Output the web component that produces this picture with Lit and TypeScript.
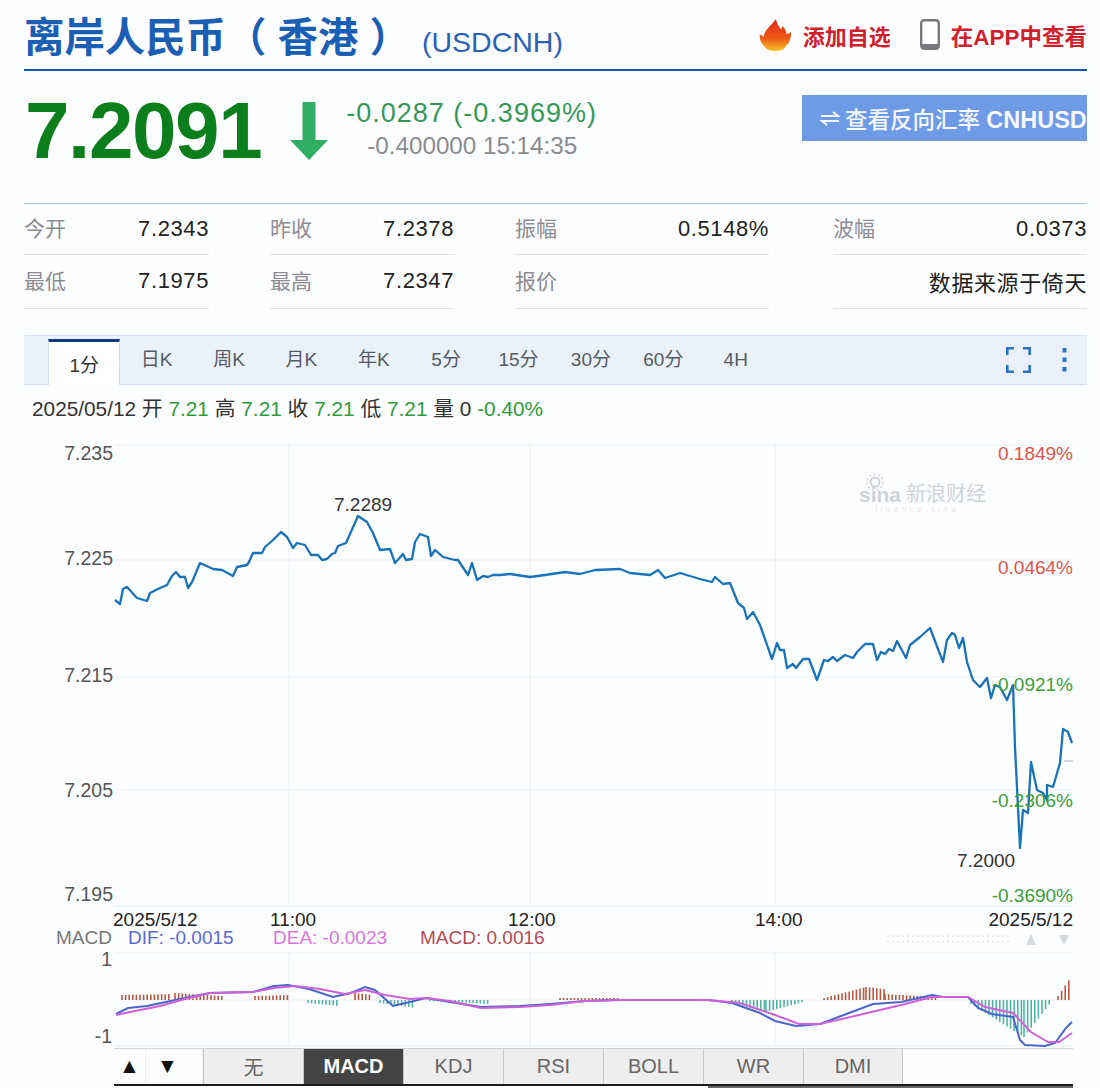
import { LitElement, html, svg, css } from 'lit';
import { customElement } from 'lit/decorators.js';

const STATS = [
  ['今开', '7.2343'], ['昨收', '7.2378'], ['振幅', '0.5148%'], ['波幅', '0.0373'],
  ['最低', '7.1975'], ['最高', '7.2347'], ['报价', ''], ['', '数据来源于倚天'],
];
const PERIODS = ['1分', '日K', '周K', '月K', '年K', '5分', '15分', '30分', '60分', '4H'];
const INDICATORS = ['无', 'MACD', 'KDJ', 'RSI', 'BOLL', 'WR', 'DMI'];

// 价格曲线，坐标就是截图里的像素位置
const PRICE: number[][] = [
  [115, 600], [120, 604], [123, 589], [127, 587], [137, 598], [147, 601], [150, 593], [160, 588], [167, 585],
  [172, 576], [176, 572], [180, 577], [185, 577], [188, 588], [192, 582], [200, 563], [213, 569], [222, 570],
  [233, 576], [237, 567], [247, 565], [249, 562], [253, 553], [262, 553], [265, 547], [273, 540], [281, 532],
  [287, 537], [293, 548], [297, 543], [305, 545], [311, 555], [318, 555], [322, 560], [327, 559], [332, 554],
  [335, 553], [338, 546], [346, 543], [358, 516], [367, 522], [373, 533], [380, 550], [390, 549], [395, 563],
  [403, 554], [406, 560], [412, 559], [415, 542], [420, 534], [428, 537], [431, 556], [435, 550], [443, 557],
  [455, 560], [458, 560], [468, 575], [472, 563], [477, 580], [483, 576], [488, 577], [493, 575], [500, 575],
  [510, 574], [530, 577], [545, 575], [565, 572], [580, 574], [595, 570], [620, 569], [630, 573], [650, 575],
  [658, 570], [665, 578], [680, 573], [700, 579], [712, 582], [715, 577], [723, 584], [730, 583], [738, 603],
  [744, 608], [747, 619], [753, 612], [760, 625], [772, 659], [777, 643], [780, 650], [784, 650], [787, 668],
  [793, 664], [796, 668], [803, 659], [809, 659], [817, 680], [824, 660], [828, 661], [833, 657], [837, 661],
  [845, 655], [853, 658], [857, 652], [865, 644], [873, 644], [877, 660], [881, 652], [885, 654], [889, 649],
  [893, 651], [897, 641], [906, 658], [910, 645], [920, 637], [930, 628], [943, 662], [947, 640], [952, 633],
  [955, 635], [959, 648], [963, 638], [967, 662], [973, 680], [980, 687], [987, 678], [991, 698], [995, 685],
  [1000, 687], [1007, 700], [1013, 685], [1015, 747], [1020, 848], [1023, 810], [1028, 813], [1031, 762],
  [1037, 790], [1043, 793], [1047, 800], [1047, 785], [1053, 787], [1060, 763], [1063, 729], [1068, 732], [1072, 743],
];
const DIF: number[][] = [
  [116, 1014], [128, 1008], [147, 1006], [175, 1000], [210, 993], [253, 992], [274, 986], [288, 985], [309, 989],
  [333, 997], [351, 993], [365, 987], [375, 990], [393, 1006], [410, 1002], [426, 998], [450, 1002], [481, 1007],
  [520, 1006], [550, 1004], [585, 1001], [620, 1000], [708, 1000], [732, 1003], [760, 1013], [775, 1021],
  [796, 1026], [820, 1024], [841, 1016], [873, 1004], [901, 1002], [932, 995], [943, 997], [968, 997],
  [978, 1008], [992, 1014], [1013, 1017], [1020, 1040], [1025, 1045], [1045, 1046], [1055, 1043], [1066, 1028], [1072, 1022],
];
const DEA: number[][] = [
  [116, 1015], [135, 1011], [160, 1006], [185, 999], [210, 993], [253, 992], [274, 988], [295, 986], [320, 989],
  [345, 994], [365, 990], [385, 995], [410, 999], [426, 998], [450, 1001], [481, 1008], [520, 1007], [550, 1005],
  [585, 1001], [620, 1000], [708, 1000], [740, 1003], [775, 1015], [799, 1024], [820, 1024], [859, 1015],
  [901, 1005], [932, 997], [968, 997], [985, 1007], [1013, 1013], [1031, 1032], [1048, 1042], [1059, 1042], [1072, 1033],
];
// 柱子分段: x0, x1, 起始高度, 结束高度 (正数向上)
const BAR_SEGMENTS: number[][] = [
  [122, 172, 5, 6], [175, 222, 7, 4], [255, 290, 4, 5], [355, 372, 7, 5],
  [308, 340, -3, -6], [380, 415, -3, -8], [430, 490, -1, -4], [560, 620, 2, 2],
  [732, 766, -3, -12], [766, 803, -12, -2], [824, 866, 2, 13], [866, 885, 13, 11], [885, 936, 6, 3],
  [971, 1024, -4, -37], [1024, 1052, -37, -1], [1058, 1071, 4, 23],
];

const toPoints = (pts: number[][]) => pts.map((p) => p.join(',')).join(' ');

function bars() {
  const out: { x: number; h: number }[] = [];
  for (const [x0, x1, h0, h1] of BAR_SEGMENTS) {
    for (let x = x0; x <= x1; x += 3.6) {
      out.push({ x, h: h0 + ((h1 - h0) * (x - x0)) / (x1 - x0) });
    }
  }
  return out;
}

@customElement('app-root')
export class AppRoot extends LitElement {
  static styles = css`
    :host {
      display: block;
      width: 1100px;
      height: 1088px;
      overflow: hidden;
      box-sizing: border-box;
      padding: 0 13px 0 24px;
      background: #fdfeff;
      font-family: 'Liberation Sans', 'Noto Sans CJK SC', sans-serif;
      color: #222;
    }

    .head {
      display: flex;
      align-items: center;
      height: 69px;
      border-bottom: 2.5px solid #0f55b4;
      box-sizing: content-box;
    }

    .title {
      font-size: 40.4px;
      font-weight: 700;
      color: #1b5fb5;
      line-height: 76px;
      margin-top: 6px;
      white-space: nowrap;
    }

    .code {
      margin-left: 12px;
      margin-top: 16px;
      font-size: 28.5px;
      color: #2a62b4;
    }

    .actions {
      margin-left: auto;
      display: flex;
      align-items: center;
      font-size: 22px;
      font-weight: 700;
      color: #d0202e;
    }

    .actions svg { display: block; }
    .add { margin: 0 29px 0 11px; }
    .app { margin-left: 11px; font-size: 22.5px; }

    .quote {
      display: flex;
      height: 131.500px;
    }

    .price {
      font-size: 80px;
      font-weight: 700;
      color: #0c7f1c;
      letter-spacing: -1.4px;
      line-height: 120px;
      margin-left: 1px;
    }

    .arrow { margin: 31px 0 0 29px; }

    .change {
      margin-left: 18px;
      padding-top: 25px;
      text-align: center;
    }

    .delta {
      font-size: 27px;
      line-height: 35px;
      letter-spacing: 1px;
      color: #35985a;
    }

    .time {
      font-size: 24.200px;
      line-height: 30px;
      color: #8b8b92;
      padding-left: 21px;
      text-align: left;
    }

    .reverse {
      margin: 24px 0 0 auto;
      width: 285px;
      height: 46px;
      background: #6f9ae6;
      color: #f4f8ff;
      font-size: 22.500px;
      font-weight: 500;
      display: flex;
      align-items: center;
      padding-left: 18px;
      box-sizing: border-box;
      white-space: pre;
      overflow: hidden;
    }

    .reverse svg { margin-right: 5px; flex: none; }
    .reverse b { font-size: 23.500px; }

    .stats {
      border-top: 1.5px solid #a2c2de;
      display: grid;
      grid-template-columns: 185px 184px 254px 257px;
      grid-template-rows: 51px 54px;
      column-gap: 61px;
    }

    .cell {
      display: flex;
      justify-content: space-between;
      align-items: center;
      border-bottom: 1.5px solid #dfe3e8;
      font-size: 22px;
      letter-spacing: 0.6px;
      color: #222;
    }

    .cell:nth-child(4n) { margin-left: 3px; }

    .cell span:first-child {
      font-size: 21px;
      letter-spacing: 0;
      color: #8c8c92;
      margin-bottom: 3px;
    }

    .periods {
      margin-top: 26px;
      height: 50px;
      box-sizing: border-box;
      display: flex;
      align-items: stretch;
      padding-left: 24px;
      background: #eaf1fa;
      border-top: 1.5px solid #d6e3f0;
      border-bottom: 1.5px solid #d0ddeb;
      font-size: 19px;
      color: #555b66;
    }

    .period {
      width: 72.4px;
      display: flex;
      align-items: center;
      justify-content: center;
      box-sizing: border-box;
      line-height: 24px;
    }

    .period.active {
      background: #fff;
      border-top: 3px solid #123c82;
      border-left: 1px solid #d0ddeb;
      border-right: 1px solid #d0ddeb;
      margin-top: 3px;
      margin-bottom: -1.5px;
      padding-top: 6px;
      color: #333;
    }

    .tools {
      margin-left: auto;
      display: flex;
      align-items: center;
      gap: 31px;
      padding-right: 20px;
    }

    .ohlc {
      padding: 12px 0 0 8px;
      font-size: 20.8px;
      line-height: 24px;
      color: #333;
      white-space: nowrap;
    }

    .ohlc b { font-weight: 400; color: #2f9a3c; }

    .chart {
      display: block;
      margin-left: -24px;
      width: 1100px;
      height: 627px;
      font-family: 'Liberation Sans', 'Noto Sans CJK SC', sans-serif;
    }

    .indicators {
      margin: 0 14px 0 90px;
      display: flex;
      height: 35px;
      border-top: 1.5px solid #d4d4d4;
      border-bottom: 2px solid #1c1c1c;
      font-size: 20px;
      color: #666;
      box-sizing: content-box;
    }

    .step {
      width: 32px;
      box-sizing: border-box;
      display: flex;
      align-items: center;
      justify-content: center;
      font-size: 21px;
      color: #111;
      border-right: 1px solid #eee;
    }

    .step:nth-child(2) { width: 57px; padding-right: 13px; }

    .ind {
      width: 100px;
      box-sizing: border-box;
      display: flex;
      align-items: center;
      justify-content: center;
      background: #eeeeee;
      border-left: 1px solid #c8c8c8;
    }

    .ind.active {
      background: #444;
      color: #fff;
      font-weight: 700;
    }

    .ind:last-child { border-right: 1px solid #c8c8c8; }

    .slider {
      margin: 0 14px 0 90px;
      height: 3px;
      display: flex;
      justify-content: flex-end;
    }

    .slider div {
      width: 365px;
      background: #666;
    }

    .grid line { stroke: #eceff3; stroke-width: 1.2; }
    .axis { font-size: 19.5px; fill: #555; }
    .up { font-size: 19px; fill: #e0524a; }
    .down { font-size: 19px; fill: #3a9e3a; }
    .mark { font-size: 19px; fill: #333; }
    .time-label { font-size: 19px; fill: #222; }
    .legend { font-size: 19px; }
  `;

  private renderChart() {
    return html`
      <svg class="chart" viewBox="0 421 1100 627" xmlns="http://www.w3.org/2000/svg">
        <g class="grid">
          <line x1="115" x2="1073" y1="445" y2="445"></line>
          <line x1="115" x2="1073" y1="560" y2="560"></line>
          <line x1="115" x2="1073" y1="677" y2="677"></line>
          <line x1="115" x2="1073" y1="790" y2="790"></line>
          <line x1="115" x2="1073" y1="906" y2="906"></line>
          <line x1="115" x2="1073" y1="953" y2="953"></line>
          <line x1="115" x2="1073" y1="1046" y2="1046"></line>
          <line x1="289" x2="289" y1="445" y2="906"></line>
          <line x1="530" x2="530" y1="445" y2="906"></line>
          <line x1="775" x2="775" y1="445" y2="906"></line>
          <line x1="289" x2="289" y1="953" y2="1046"></line>
          <line x1="530" x2="530" y1="953" y2="1046"></line>
          <line x1="775" x2="775" y1="953" y2="1046"></line>
        </g>

        <g fill="#cfd3d8">
          <circle cx="875" cy="482" r="4.500" fill="none" stroke="#cfd3d8" stroke-width="2"></circle>
          <circle cx="875" cy="482" r="8" fill="none" stroke="#d8dbdf" stroke-width="2" stroke-dasharray="2 2.500"></circle>
          <text x="859" y="502" font-size="21" font-weight="700">sina</text>
          <text x="906" y="501" font-size="20">新浪财经</text>
          <text x="875" y="512" font-size="9" fill="#e6e8eb" letter-spacing="3">finance.sina</text>
        </g>

        <polyline points=${toPoints(PRICE)} fill="none" stroke="#1a72b8" stroke-width="2.300" stroke-linejoin="round"></polyline>
        <line x1="1064" x2="1073" y1="761" y2="761" stroke="#c4ccd6" stroke-width="1.5"></line>

        <text class="axis" x="113" y="460" text-anchor="end">7.235</text>
        <text class="axis" x="113" y="565" text-anchor="end">7.225</text>
        <text class="axis" x="113" y="682" text-anchor="end">7.215</text>
        <text class="axis" x="113" y="797" text-anchor="end">7.205</text>
        <text class="axis" x="113" y="901" text-anchor="end">7.195</text>

        <text class="up" x="1073" y="460" text-anchor="end">0.1849%</text>
        <text class="up" x="1073" y="574" text-anchor="end">0.0464%</text>
        <text class="down" x="1073" y="691" text-anchor="end">-0.0921%</text>
        <text class="down" x="1073" y="807" text-anchor="end">-0.2306%</text>
        <text class="down" x="1073" y="902" text-anchor="end">-0.3690%</text>

        <text class="mark" x="334" y="511">7.2289</text>
        <text class="mark" x="957" y="867">7.2000</text>

        <text class="time-label" x="113" y="926">2025/5/12</text>
        <text class="time-label" x="270" y="926">11:00</text>
        <text class="time-label" x="508" y="926">12:00</text>
        <text class="time-label" x="755" y="926">14:00</text>
        <text class="time-label" x="1073" y="926" text-anchor="end">2025/5/12</text>

        <text class="legend" x="56" y="944" fill="#777">MACD</text>
        <text class="legend" x="128" y="944" fill="#5a6ad0">DIF: -0.0015</text>
        <text class="legend" x="273" y="944" fill="#d678dc">DEA: -0.0023</text>
        <text class="legend" x="420" y="944" fill="#b24a58">MACD: 0.0016</text>

        <line x1="887" x2="1010" y1="936" y2="936" stroke="#ddd" stroke-dasharray="2 3"></line>
        <line x1="887" x2="1010" y1="942" y2="942" stroke="#ddd" stroke-dasharray="2 3"></line>
        <polygon points="1031,934 1036,945 1026,945" fill="#d5d8dc"></polygon>
        <polygon points="1059,935 1069,935 1064,945" fill="#d5d8dc"></polygon>

        <text class="axis" x="112" y="966" text-anchor="end">1</text>
        <text class="axis" x="112" y="1043" text-anchor="end">-1</text>

        <line x1="115" x2="1073" y1="1000" y2="1000" stroke="#eef0f3"></line>
        ${bars().map((b) =>
          svg`<line x1=${b.x} x2=${b.x} y1="1000" y2=${1000 - b.h} stroke=${b.h > 0 ? '#b9583f' : '#4fb3a6'} stroke-width="1.6"></line>`
        )}
        <polyline points=${toPoints(DIF)} fill="none" stroke="#4a66c8" stroke-width="2"></polyline>
        <polyline points=${toPoints(DEA)} fill="none" stroke="#d060d8" stroke-width="2"></polyline>
      </svg>
    `;
  }

  render() {
    return html`
      <div class="head">
        <div class="title">离岸人民币（ 香港 ）</div>
        <div class="code">(USDCNH)</div>
        <div class="actions">
          <svg width="33" height="32" viewBox="0 0 33 32">
            <defs>
              <linearGradient id="flame" x1="0" y1="0" x2="0" y2="1">
                <stop offset="0" stop-color="#e0281c"></stop>
                <stop offset="0.6" stop-color="#ee5a14"></stop>
                <stop offset="1" stop-color="#f6c22c"></stop>
              </linearGradient>
            </defs>
            <path
              d="M17 0c1 5 3 8 5 10 1-1 1.500-2 1.500-3 3 3 4 6 4 8 1.500 0 3-.8 4.500-2 .5 6-1.500 11-5 14-1.500 3-5 5-10.500 5S7 30 5 27C2 24 0 20 1 15c1 1.500 2.500 2.500 4 2.500C4.500 12 11 8 17 0z"
              fill="url(#flame)"
            ></path>
          </svg>
          <span class="add">添加自选</span>
          <svg width="20" height="31" viewBox="0 0 20 31">
            <rect x="1.200" y="1.200" width="17.600" height="28.600" rx="3" fill="#fff" stroke="#77797c" stroke-width="2.400"></rect>
            <rect x="2" y="25" width="16" height="4" fill="#77797c"></rect>
          </svg>
          <span class="app">在APP中查看</span>
        </div>
      </div>

      <div class="quote">
        <div class="price">7.2091</div>
        <svg class="arrow" width="38" height="58" viewBox="0 0 38 58">
          <path d="M12.500 0h13v38H38L19 58 0 38h12.500z" fill="#2fae64"></path>
        </svg>
        <div class="change">
          <div class="delta">-0.0287 (-0.3969%)</div>
          <div class="time">-0.400000 15:14:35</div>
        </div>
        <div class="reverse">
          <svg width="20" height="20" viewBox="0 0 20 20" fill="none" stroke="#f4f8ff" stroke-width="2">
            <path d="M1 8h17l-5-4"></path>
            <path d="M19 13H2l5 4"></path>
          </svg>
          <span>查看反向汇率 <b>CNHUSD</b></span>
        </div>
      </div>

      <div class="stats">
        ${STATS.map(([k, v]) => html`<div class="cell"><span>${k}</span><span>${v}</span></div>`)}
      </div>

      <div class="periods">
        ${PERIODS.map((p, i) => html`<div class="period ${i === 0 ? 'active' : ''}">${p}</div>`)}
        <div class="tools">
          <svg width="25" height="26" viewBox="0 0 25 26" fill="none" stroke="#2a72c4" stroke-width="2.600">
            <path d="M1.300 8V1.300H8M17 1.300h6.700V8M1.300 18v6.700H8M17 24.700h6.700V18"></path>
          </svg>
          <svg width="5" height="24" viewBox="0 0 5 24" fill="#2a72c4">
            <rect x="0.500" y="0" width="4" height="4.500"></rect>
            <rect x="0.500" y="9.500" width="4" height="4.500"></rect>
            <rect x="0.500" y="19" width="4" height="4.500"></rect>
          </svg>
        </div>
      </div>

      <div class="ohlc">
        2025/05/12 开 <b>7.21</b> 高 <b>7.21</b> 收 <b>7.21</b> 低 <b>7.21</b> 量 0 <b>-0.40%</b>
      </div>

      ${this.renderChart()}

      <div class="indicators">
        <div class="step">▲</div>
        <div class="step">▼</div>
        ${INDICATORS.map((n) => html`<div class="ind ${n === 'MACD' ? 'active' : ''}">${n}</div>`)}
      </div>
      <div class="slider"><div></div></div>
    `;
  }
}
